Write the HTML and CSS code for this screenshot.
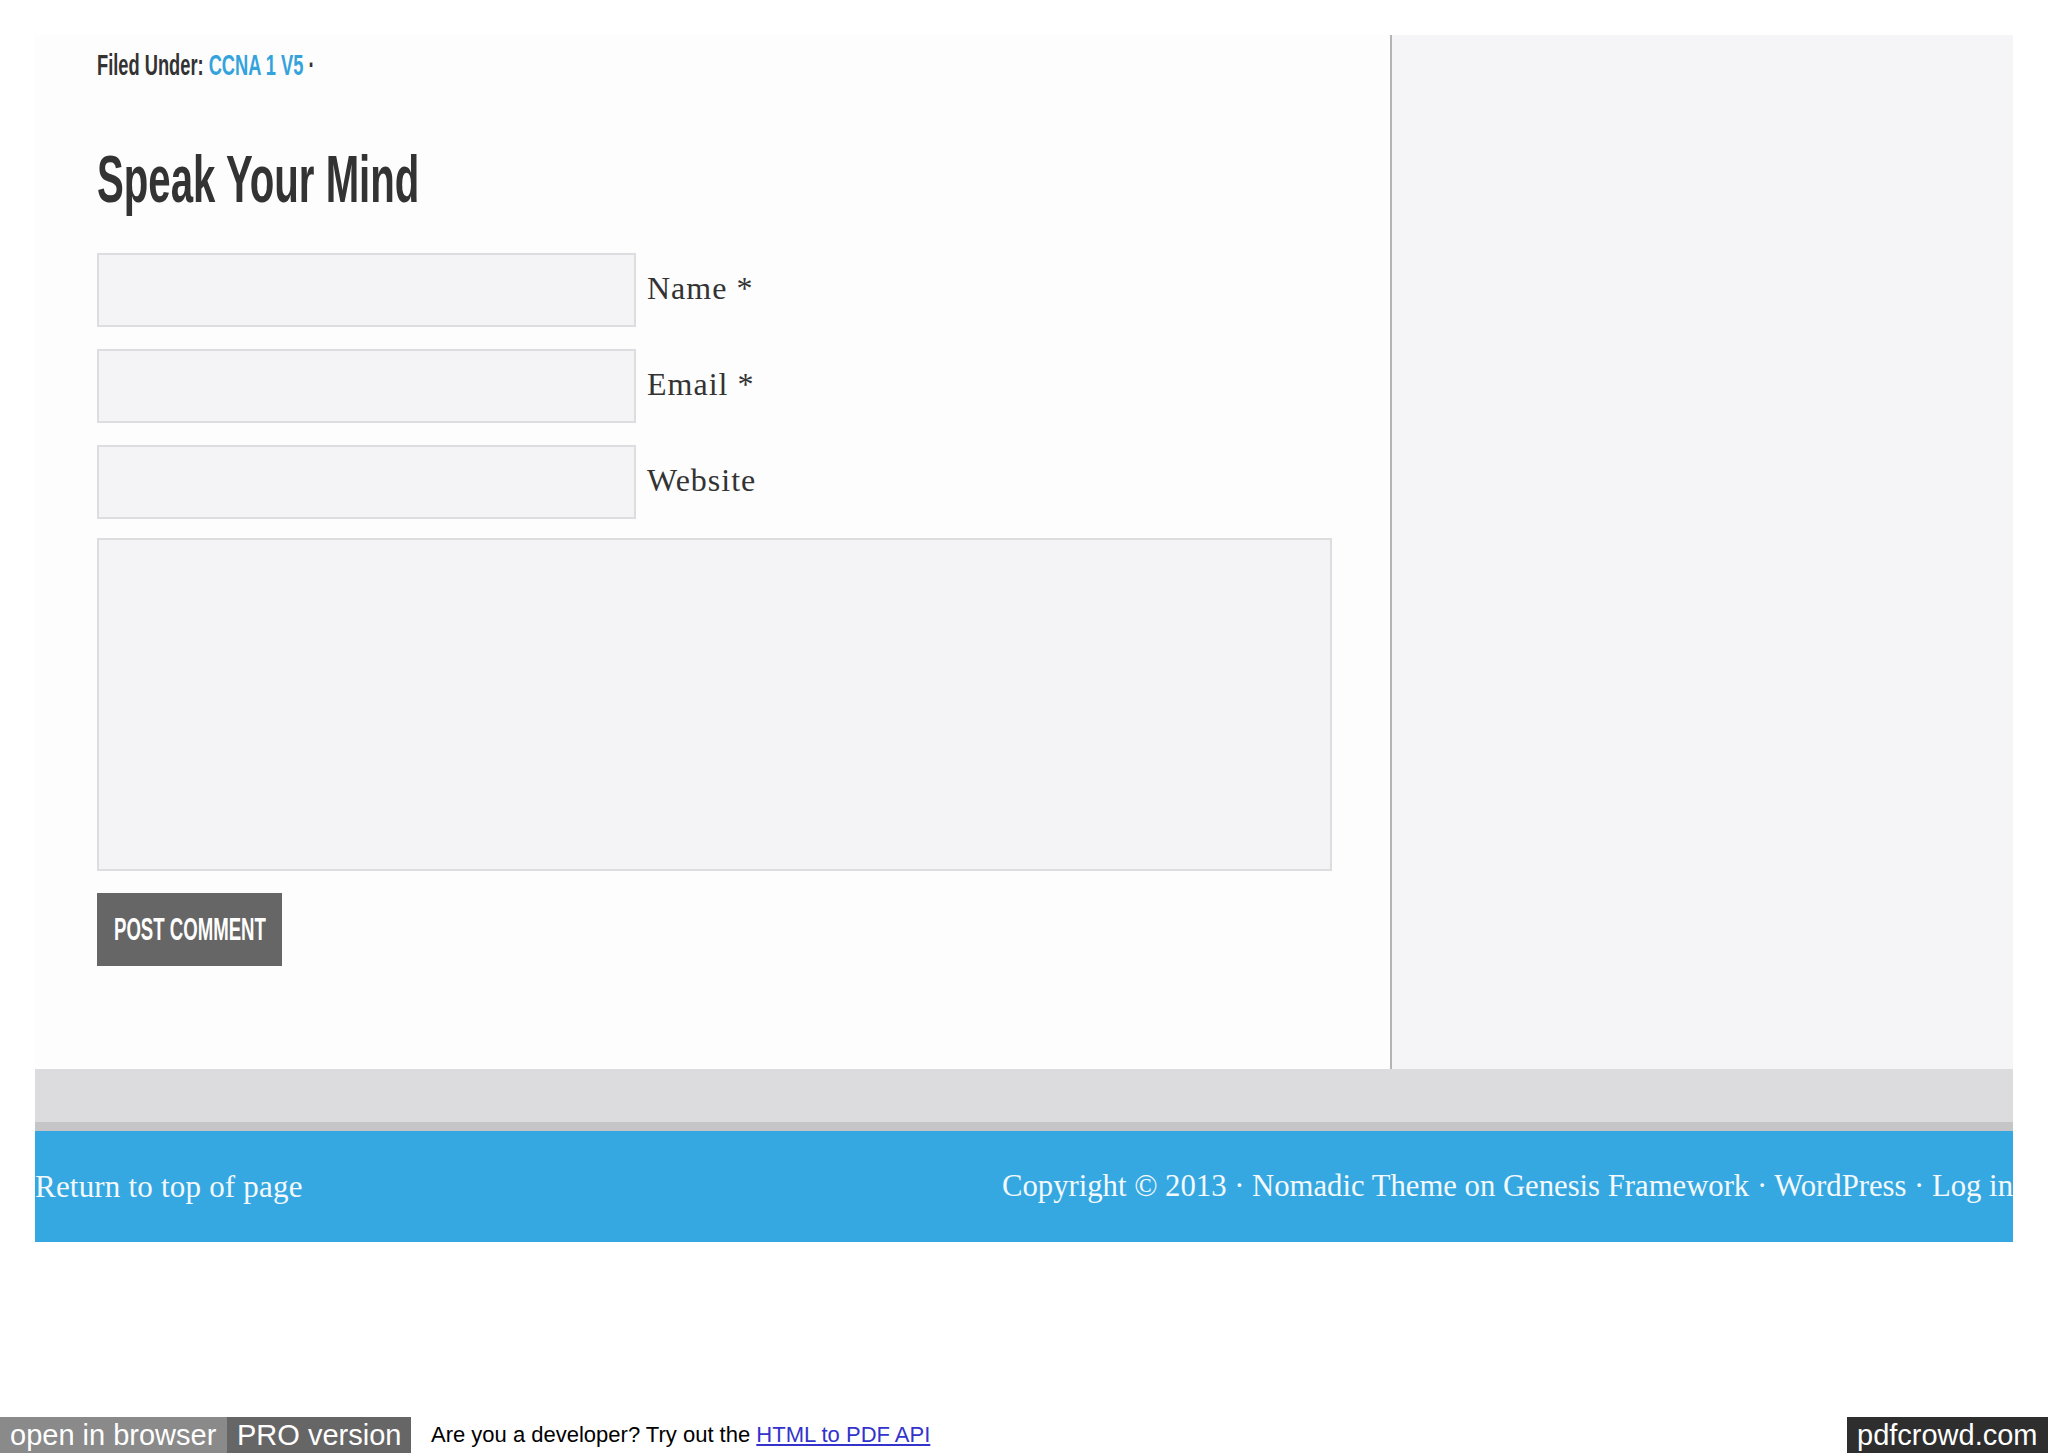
FILE: index.html
```html
<!DOCTYPE html>
<html lang="en">
<head>
<meta charset="utf-8">
<title>Speak Your Mind</title>
<link rel="stylesheet" href="styles.css">
</head>
<body>
<div class="page">
  <div class="wrap">
    <div class="content-row">
      <main class="main">
        <p class="filed"><span class="cond cond-filed">Filed Under: <a href="#" class="cat">CCNA 1 V5</a> ·</span></p>
        <h3 class="comment-title"><span class="cond cond-title">Speak Your Mind</span></h3>
        <form class="comment-form">
          <div class="field">
            <input type="text" class="text-input" id="author">
            <label for="author" class="field-label">Name *</label>
          </div>
          <div class="field">
            <input type="text" class="text-input" id="email">
            <label for="email" class="field-label">Email *</label>
          </div>
          <div class="field">
            <input type="text" class="text-input" id="url">
            <label for="url" class="field-label">Website</label>
          </div>
          <textarea class="comment-text"></textarea>
          <button type="button" class="submit"><span class="cond cond-btn">POST COMMENT</span></button>
        </form>
      </main>
      <aside class="sidebar"></aside>
    </div>
    <div class="footer-widgets"></div>
    <footer class="site-footer">
      <a href="#" class="top-link">Return to top of page</a>
      <div class="creds">Copyright © 2013 · <a href="#">Nomadic Theme</a> on <a href="#">Genesis Framework</a> · <a href="#">WordPress</a> · <a href="#">Log in</a></div>
    </footer>
  </div>
  <div class="pdf-bar">
    <span class="pdf-btn pdf-open">open in browser</span>
    <span class="pdf-btn pdf-pro">PRO version</span>
    <span class="pdf-dev">Are you a developer? Try out the <a href="#" class="pdf-link">HTML to PDF API</a></span>
    <span class="pdf-btn pdf-brand">pdfcrowd.com</span>
  </div>
</div>
</body>
</html>
```

FILE: styles.css
```css
html, body {
  margin: 0;
  padding: 0;
  background: #ffffff;
}

.page {
  min-height: 1453px;
  display: flex;
  flex-direction: column;
}

.wrap {
  margin: 35px 35px 0 35px;
}

.content-row {
  display: flex;
}

.main {
  width: 1355px;
  background: #fdfdfd;
  padding: 16px 0 103px 62px;
  box-sizing: border-box;
}

.sidebar {
  flex: 1;
  background: #f5f4f6;
  border-left: 2px solid #b4b4b4;
}

.cond {
  display: inline-block;
  white-space: nowrap;
  transform-origin: left center;
  font-family: "Liberation Sans", Arial, sans-serif;
  font-weight: 700;
}

.filed {
  margin: 0;
  font-size: 29px;
  line-height: 29px;
  color: #333333;
}

.cond-filed {
  transform: scaleX(0.63);
}

.cat {
  color: #34a3dc;
  text-decoration: none;
}

.comment-title {
  margin: 65px 0 0 0;
  font-size: 67px;
  line-height: 67px;
  font-weight: 700;
  color: #333333;
}

.cond-title {
  transform: scaleX(0.6);
}

.comment-form {
  margin-top: 40px;
  display: flex;
  flex-direction: column;
  align-items: flex-start;
}

.field {
  display: flex;
  align-items: center;
  margin-bottom: 22px;
}

.field:nth-child(3) {
  margin-bottom: 19px;
}

.text-input {
  width: 539px;
  height: 74px;
  box-sizing: border-box;
  border: 2px solid #dddcde;
  background: #f4f3f5;
  margin: 0;
  padding: 0 10px;
  outline: none;
}

.field-label {
  margin-left: 11px;
  font-family: "Liberation Serif", "Times New Roman", serif;
  font-size: 32px;
  line-height: 32px;
  letter-spacing: 1px;
  padding-bottom: 5px;
  color: #333333;
}

.comment-text {
  width: 1235px;
  height: 333px;
  box-sizing: border-box;
  border: 2px solid #dddcde;
  background: #f4f3f5;
  margin: 0;
  padding: 0;
  resize: none;
  outline: none;
  display: block;
}

.submit {
  margin-top: 22px;
  width: 185px;
  height: 73px;
  border: 0;
  background: #666666;
  color: #ffffff;
  padding: 0 0 0 17px;
  text-align: left;
  font-size: 31px;
  line-height: 31px;
  overflow: visible;
  cursor: pointer;
}

.cond-btn {
  transform: scaleX(0.6);
  margin-right: -120px;
  color: #ffffff;
}

.footer-widgets {
  height: 53px;
  background: #dcdbdd;
  border-bottom: 9px solid #c5c5c7;
}

.site-footer {
  height: 111px;
  background: #36a8e1;
  display: flex;
  justify-content: space-between;
  align-items: center;
  font-family: "Liberation Serif", "Times New Roman", serif;
  font-size: 31px;
  line-height: 31px;
  color: #f3f9fd;
}

.site-footer a {
  color: #f3f9fd;
  text-decoration: none;
}

.top-link {
  letter-spacing: 0.2px;
}

.creds {
  font-size: 30.7px;
}

.pdf-bar {
  margin-top: auto;
  height: 36px;
  display: flex;
  align-items: stretch;
  font-family: "Liberation Sans", Arial, sans-serif;
}

.pdf-btn {
  display: flex;
  align-items: center;
  padding: 0 10px;
  font-size: 29px;
  color: #ffffff;
  white-space: nowrap;
}

.pdf-open {
  width: 227px;
  box-sizing: border-box;
  background: #8a8a8a;
}

.pdf-pro {
  width: 184px;
  box-sizing: border-box;
  background: #666666;
}

.pdf-dev {
  display: flex;
  align-items: center;
  margin-left: 20px;
  font-size: 22px;
  color: #000000;
  white-space: pre;
}

.pdf-link {
  color: #3333cc;
  text-decoration: underline;
}

.pdf-brand {
  margin-left: auto;
  width: 201px;
  box-sizing: border-box;
  background: #2e2e2e;
}
```
